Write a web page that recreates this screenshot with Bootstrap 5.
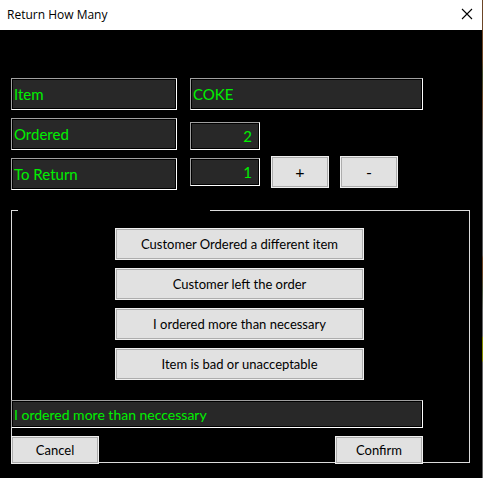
<!DOCTYPE html>
<html lang="en">
<head>
<meta charset="utf-8">
<meta name="viewport" content="width=device-width, initial-scale=1">
<title>Return How Many</title>
<link href="https://cdn.jsdelivr.net/npm/bootstrap@5.3.0/dist/css/bootstrap.min.css" rel="stylesheet">
<style>
  body { font-family: Lato, "Liberation Sans", sans-serif; background: #000; }
  .dialog-window {
    border-right: 1px solid #555;
    border-image: linear-gradient(#6b4526 0 60px, #3f4a2c 75px, #6b4526 100px, #5a5a5a 140px 255px, #6b4526 258px 272px, #4b5540 290px, #666 310px 336px, #858a00 337px 360px, #666 362px) 1;
    border-width: 0 1px 0 0;
  }
  .title-bar { height: 30px; padding: 0 7px; font: 12px/30px "Open Sans", "Noto Sans", sans-serif; color: #000; }
  .title-bar h1 { font: inherit; }
  .close-btn { width: 16px; height: 16px; margin-bottom: 2px; line-height: 0; }
  .dialog-body { padding: 48px 12px 14px 11px; }
  .field {
    height: 32px; padding: 0 7px 0 2px; min-width: 0;
    border: 1px solid; border-color: #a0a0a0 #fff #fff #a0a0a0; border-radius: 0;
    background: #282828; color: #00f000;
    box-shadow: inset 0 0 0 1px #000;
    font-size: 15px; line-height: 30px; outline: 0;
  }
  .field-short { height: 28px; line-height: 26px; }
  .field-reason { font-size: 14px; }
  .label-col { width: 166px; gap: 8px; }
  .value-col { margin: 0 47px 0 13px; }
  .qty { width: 70px; }
  .qty-ordered { margin: 12px 0 6px; }
  .win-btn {
    height: 32px; padding: 0; color: #000; font-size: 13px; line-height: 30px;
    border: 1px solid #f0f0f0; border-radius: 0; background: #e1e1e1;
    box-shadow: inset 0 0 0 1px #adadad;
  }
  .win-btn:hover { background: #e5f1fb; color: #000; }
  .step-row { gap: 11px; }
  .step-btn { width: 58px; font-size: 16px; }
  .reasons { margin-top: 20px; border: 1px solid #dcdcdc; }
  .reasons legend { float: none; width: 192px; height: 1px; margin: 0 0 0 6px; }
  .reason-list { gap: 8px; padding: 17px 105px 20px 103px; }
  .reason-foot { margin: 0 46px -2px -1px; gap: 8px; }
  .foot-btn { width: 88px; height: 28px; line-height: 26px; }
</style>
<script src="https://cdn.jsdelivr.net/npm/bootstrap@5.3.0/dist/js/bootstrap.bundle.min.js" defer></script>
</head>
<body>
<div class="dialog-window min-vh-100">
  <header class="title-bar d-flex align-items-center justify-content-between bg-white">
    <h1 class="m-0">Return How Many</h1>
    <button type="button" class="close-btn btn border-0 p-0" aria-label="Close">
      <svg width="16" height="16" viewBox="0 0 16 16" fill="none" stroke="#000" stroke-width="1.1"><path d="M3 3l10 10M13 3L3 13"/></svg>
    </button>
  </header>
  <form class="dialog-body">
    <div class="d-flex">
      <div class="label-col d-flex flex-column flex-shrink-0">
        <label class="field" for="item">Item</label>
        <label class="field" for="ordered">Ordered</label>
        <label class="field" for="toReturn">To Return</label>
      </div>
      <div class="value-col d-flex flex-column flex-fill">
        <input class="field w-100" id="item" type="text" value="COKE" readonly>
        <input class="field field-short qty qty-ordered text-end" id="ordered" type="text" value="2" readonly>
        <div class="step-row d-flex align-items-center">
          <input class="field field-short qty text-end" id="toReturn" type="text" value="1">
          <div class="step-row d-flex">
            <button type="button" class="win-btn step-btn btn">+</button>
            <button type="button" class="win-btn step-btn btn">-</button>
          </div>
        </div>
      </div>
    </div>
    <fieldset class="reasons">
      <legend></legend>
      <div class="reason-list d-flex flex-column">
        <button type="button" class="win-btn btn">Customer Ordered a different item</button>
        <button type="button" class="win-btn btn">Customer left the order</button>
        <button type="button" class="win-btn btn">I ordered more than necessary</button>
        <button type="button" class="win-btn btn">Item is bad or unacceptable</button>
      </div>
      <div class="reason-foot d-flex flex-column">
        <input class="field field-short field-reason w-100" type="text" value="I ordered more than neccessary" aria-label="Reason">
        <div class="d-flex justify-content-between">
          <button type="button" class="win-btn foot-btn btn">Cancel</button>
          <button type="submit" class="win-btn foot-btn btn">Confirm</button>
        </div>
      </div>
    </fieldset>
  </form>
</div>
</body>
</html>
